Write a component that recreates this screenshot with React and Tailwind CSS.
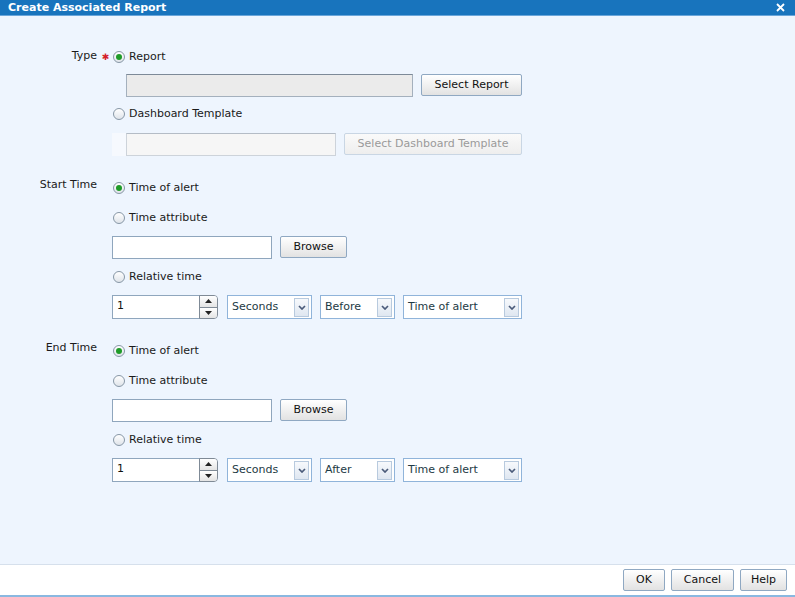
import React from "react";

const font = { fontFamily: '"DejaVu Sans", Verdana, sans-serif' };

const Radio = ({ checked, label }) => (
  <div className="flex items-center h-[18px] pl-px">
    <span className="w-[12px] h-[12px] rounded-full border border-[#8797a6] bg-gradient-to-b from-white to-[#dfe4ea] flex items-center justify-center">
      {checked && <span className="w-[6px] h-[6px] rounded-full bg-[#1e9b28]" />}
    </span>
    <span className="ml-[4px] text-[11px] text-[#1a1a1a]">{label}</span>
  </div>
);

const Button = ({ children, className = "", disabled }) => (
  <button
    className={
      "h-[22px] rounded-[2px] border text-[11px] bg-gradient-to-b " +
      (disabled
        ? "border-[#c9d6e4] from-[#fafafa] to-[#eeeeee] text-[#9a9a9a] "
        : "border-[#8fa8c2] from-white to-[#e2e2e2] text-[#111] ") +
      className
    }
  >
    {children}
  </button>
);

const Chevron = () => (
  <svg width="8" height="5" viewBox="0 0 8 5">
    <path d="M1 1 L4 4 L7 1" fill="none" stroke="#4b5b7a" strokeWidth="1.7" />
  </svg>
);

const Select = ({ value, className }) => (
  <div className={"h-[24px] bg-white border border-[#90b4da] flex items-center justify-between pl-[4px] pr-[2px] " + className}>
    <span className="text-[11px] text-[#1d3a44]">{value}</span>
    <span className="w-[15px] h-[19px] border border-[#b8cade] bg-gradient-to-b from-[#f7f9fc] to-[#dfe7f1] flex items-center justify-center">
      <Chevron />
    </span>
  </div>
);

const Spinner = () => (
  <div className="flex h-[24px]">
    <div className="w-[88px] h-[24px] bg-white border border-[#8fa6bd] text-[11px] text-[#111] pl-[4px] pt-[2px]">1</div>
    <div className="w-[19px] h-[24px] flex flex-col border border-[#7f8a96] rounded-r-[4px] overflow-hidden -ml-px">
      <div className="flex-1 bg-gradient-to-b from-white to-[#e4e4e4] flex items-center justify-center border-b border-[#7f8a96]">
        <svg width="7" height="4" viewBox="0 0 7 4"><path d="M0 4 L3.5 0 L7 4 Z" fill="#222" /></svg>
      </div>
      <div className="flex-1 bg-gradient-to-b from-white to-[#e4e4e4] flex items-center justify-center">
        <svg width="7" height="4" viewBox="0 0 7 4"><path d="M0 0 L3.5 4 L7 0 Z" fill="#222" /></svg>
      </div>
    </div>
  </div>
);

const TimeSection = ({ label, dir }) => (
  <div className="flex">
    <div className="w-[97px] text-right text-[11px] leading-[12px] text-[#1a1a1a]">{label}</div>
    <div className="ml-[15px] flex flex-col">
      <Radio checked label="Time of alert" />
      <div className="mt-[12px]">
        <Radio label="Time attribute" />
      </div>
      <div className="mt-[9px] flex items-start">
        <div className="w-[160px] h-[23px] bg-white border border-[#8fa6bd]" />
        <Button className="ml-[8px] w-[67px]">Browse</Button>
      </div>
      <div className="mt-[9px]">
        <Radio label="Relative time" />
      </div>
      <div className="mt-[9px] flex">
        <Spinner />
        <Select value="Seconds" className="ml-[9px] w-[85px]" />
        <Select value={dir} className="ml-[8px] w-[75px]" />
        <Select value="Time of alert" className="ml-[8px] w-[119px]" />
      </div>
    </div>
  </div>
);

export default function App() {
  return (
    <div className="w-[795px] h-[597px] flex flex-col bg-[#eef5fe]" style={font}>
      <div className="h-[16px] bg-[#1874bd] border-b border-[#6aa6da] flex items-center justify-between pl-[8px] pr-[10px]">
        <span className="text-white font-bold text-[11px] leading-none">Create Associated Report</span>
        <svg width="9" height="9" viewBox="0 0 9 9">
          <path d="M1 1 L8 8 M8 1 L1 8" stroke="white" strokeWidth="1.8" />
        </svg>
      </div>

      <div className="flex-1 pt-[32px]">
        <div className="flex">
          <div className="w-[97px] text-right text-[11px] leading-[15px] text-[#1a1a1a]">Type</div>
          <div className="w-[15px] flex justify-center pt-[5px] pl-[2px]">
            <span className="text-[#d4202a] text-[9px] leading-none">✱</span>
          </div>
          <div className="flex flex-col">
            <Radio checked label="Report" />
            <div className="mt-[8px] flex items-start pl-[14px]">
              <div className="w-[287px] h-[23px] bg-[#ebebeb] border border-[#a4b0bd] border-t-[#7d8a98]" />
              <Button className="ml-[8px] w-[101px]">Select Report</Button>
            </div>
            <div className="mt-[8px]">
              <Radio label="Dashboard Template" />
            </div>
            <div className="mt-[10px] flex items-start">
              <div className="bg-[#f6f9fe] pl-[14px]">
                <div className="w-[210px] h-[23px] bg-[#f6f6f6] border border-[#cdd3da] border-t-[#b4bcc6]" />
              </div>
              <Button disabled className="ml-[8px] w-[178px]">Select Dashboard Template</Button>
            </div>
          </div>
        </div>

        <div className="mt-[23px]">
          <TimeSection label="Start Time" dir="Before" />
        </div>
        <div className="mt-[23px]">
          <TimeSection label="End Time" dir="After" />
        </div>
      </div>

      <div className="h-[33px] bg-white border-t border-[#d6e0ec] border-b-2 border-b-[#8ab8e0] flex items-center justify-end pr-[8px] gap-[6px]">
        <Button className="w-[42px] h-[20px]">OK</Button>
        <Button className="w-[63px] h-[20px]">Cancel</Button>
        <Button className="w-[47px] h-[20px]">Help</Button>
      </div>
    </div>
  );
}
